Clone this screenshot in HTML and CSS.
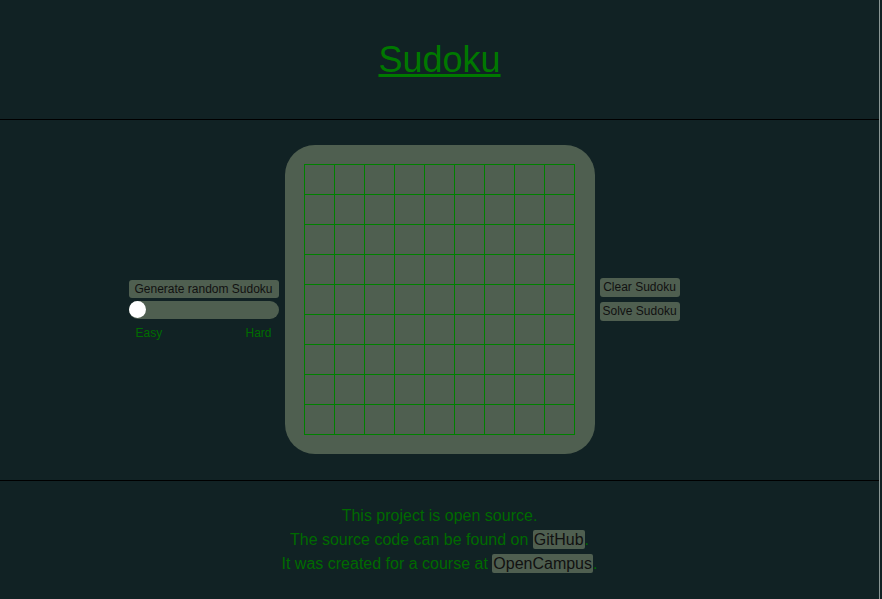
FILE: index.html
```html
<!DOCTYPE html>
<html lang="en">
<head>
<meta charset="utf-8">
<title>Sudoku</title>
<link rel="stylesheet" href="styles.css">
</head>
<body>
<header class="header">
  <h1 class="title"><a href="#" class="title-link">Sudoku</a></h1>
</header>
<main class="main">
  <div class="side side-left">
    <button class="btn btn-wide">Generate random Sudoku</button>
    <input class="slider" type="range" min="0" max="10" value="0">
    <div class="slider-labels"><span>Easy</span><span>Hard</span></div>
  </div>
  <div class="board">
    <div class="grid" id="grid"></div>
  </div>
  <div class="side side-right">
    <button class="btn">Clear Sudoku</button>
    <button class="btn">Solve Sudoku</button>
  </div>
</main>
<footer class="footer">
  <p class="line">This project is open source.</p>
  <p class="line">The source code can be found on <a href="#" class="chip">GitHub</a>.</p>
  <p class="line">It was created for a course at <a href="#" class="chip">OpenCampus</a>.</p>
</footer>
<script>
  var g = document.getElementById('grid');
  for (var i = 0; i < 81; i++) {
    var c = document.createElement('div');
    c.className = 'cell';
    g.appendChild(c);
  }
</script>
</body>
</html>
```
FILE: styles.css
```css
* { box-sizing: border-box; }
html, body { margin: 0; padding: 0; }
body {
  background: #112224;
  font-family: "Liberation Sans", Arial, sans-serif;
  color: #007800;
  width: 880px;
  border-right: 1px solid #8a9694;
  min-height: 599px;
}
.header {
  height: 120px;
  border-bottom: 1px solid #000;
  display: flex;
  align-items: center;
  justify-content: center;
}
.title {
  margin: 0;
  font-size: 36px;
  font-weight: normal;
  line-height: normal;
}
.title-link { color: #007800; }
.main {
  height: 361px;
  border-bottom: 1px solid #000;
  padding-bottom: 2px;
  display: grid;
  grid-template-columns: 1fr auto 1fr;
  align-items: center;
  column-gap: 5px;
}
.side {
  display: flex;
  flex-direction: column;
}
.side-left {
  justify-self: end;
  width: 150px;
  margin-right: 1px;
  gap: 3px;
  padding-top: 22px;
}
.side-right {
  justify-self: start;
  align-items: stretch;
  gap: 5px;
  padding-top: 1px;
}
.btn {
  font-family: "Liberation Sans", Arial, sans-serif;
  font-size: 12px;
  line-height: 15px;
  height: 19px;
  color: #111;
  background: #4f5f50;
  border: 0;
  border-radius: 3px;
  padding: 2px 3px;
  margin: 0;
  text-align: center;
}
.btn-wide { padding: 2px 4px 1px; height: 18px; }
.slider {
  -webkit-appearance: none;
  appearance: none;
  width: 150px;
  height: 18px;
  margin: 0;
  background: #4f5f50;
  border-radius: 9px;
  outline: none;
}
.slider::-webkit-slider-thumb {
  -webkit-appearance: none;
  appearance: none;
  width: 17px;
  height: 17px;
  border-radius: 50%;
  background: #fff;
  border: 0;
}
.slider-labels {
  display: flex;
  justify-content: space-between;
  font-size: 12px;
  padding: 4px 7px 0;
  line-height: 15px;
  color: #006c00;
}
.board {
  background: #4f5f50;
  border-radius: 30px;
  padding: 19px;
  width: 310px;
  height: 309px;
}
.grid {
  display: grid;
  grid-template-columns: repeat(9, 29px);
  grid-auto-rows: 29px;
  gap: 1px;
  padding: 1px;
  background: #008000;
  width: 271px;
}
.cell { background: #4f5f50; }
.footer {
  padding: 23px 0 22px;
  text-align: center;
  font-size: 16px;
  color: #006a00;
}
.line {
  margin: 0;
  line-height: 24px;
}
.chip {
  color: #111;
  background: #4f5f50;
  text-decoration: none;
  border-radius: 2px;
  padding: 1px 1px;
}
```
